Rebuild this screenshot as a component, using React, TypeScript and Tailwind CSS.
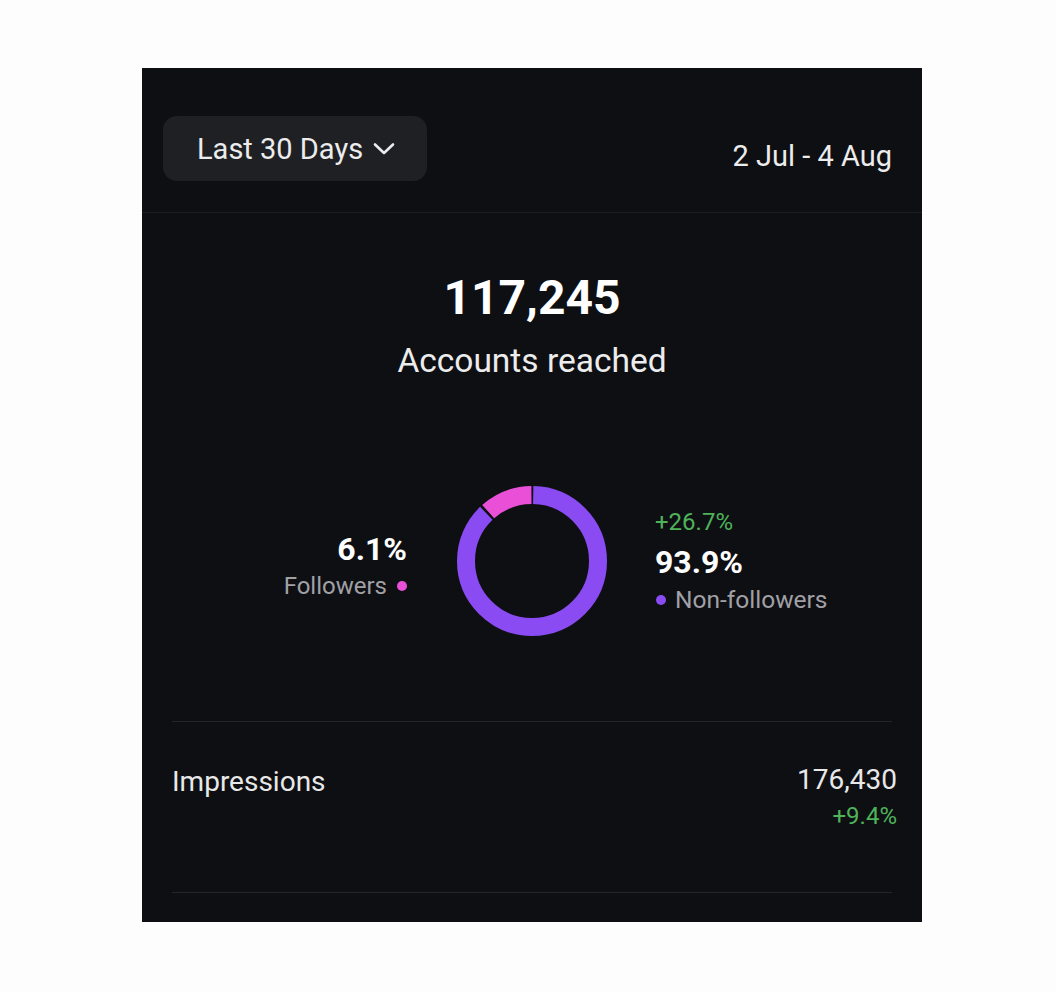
const font = { fontFamily: 'Roboto, "Liberation Sans", sans-serif' };

// Ring geometry for the reach split
const R = 66;
const C = 2 * Math.PI * R;

function ReachDonut() {
  const followers = 0.12;
  const gap = 2.5;
  return (
    <svg width="150" height="150" viewBox="0 0 150 150">
      <g transform="rotate(-90 75 75)">
        {/* non-followers, clockwise from the top */}
        <circle
          cx="75"
          cy="75"
          r={R}
          fill="none"
          stroke="#8a4cf2"
          strokeWidth="18"
          strokeDasharray={`${C * (1 - followers) - gap} ${C}`}
          strokeDashoffset={-gap / 2}
        />
        {/* followers, the last slice before the top */}
        <circle
          cx="75"
          cy="75"
          r={R}
          fill="none"
          stroke="#ea4fd8"
          strokeWidth="18"
          strokeDasharray={`${C * followers - gap} ${C}`}
          strokeDashoffset={-(C * (1 - followers) + gap / 2)}
        />
      </g>
    </svg>
  );
}

function Chevron() {
  return (
    <svg width="22" height="14" viewBox="0 0 22 14" fill="none">
      <path d="M2 2.5 L11 11 L20 2.5" stroke="#ececec" strokeWidth="2.6" strokeLinecap="round" strokeLinejoin="round" />
    </svg>
  );
}

export default function App() {
  return (
    <div className="min-h-[992px] bg-[#fdfdfd] pl-[142px] pt-[68px]" style={font}>
      <div className="flex h-[854px] w-[780px] flex-col bg-[#0e0f13]">
        {/* Header */}
        <div className="flex h-[144px] items-start justify-between pl-[21px] pr-[30px] pt-[48px]">
          <button className="flex h-[65px] w-[264px] items-center gap-[10px] rounded-[14px] bg-[#1f2024] pl-[34px] text-[29px] leading-[34px] text-[#ececec]">
            Last 30 Days
            <Chevron />
          </button>
          <span className="mt-[23px] text-[29px] leading-[34px] text-[#ececec]">2 Jul - 4 Aug</span>
        </div>
        <div className="h-px bg-[#1c1d22]" />

        {/* Accounts reached */}
        <div className="mt-[59px] flex flex-col items-center">
          <div className="text-[48px] font-bold leading-[52px] text-white">117,245</div>
          <div className="mt-[18px] text-[33.5px] leading-[38px] text-[#ececec]">Accounts reached</div>
        </div>

        <div className="mt-[106px] grid grid-cols-[1fr_auto_1fr] items-center">
          <div className="flex flex-col items-end pr-[50px] pt-[11px]">
            <span className="text-[32px] font-bold leading-[34px] text-white">6.1%</span>
            <span className="mt-[5px] flex items-center gap-[10px] text-[24px] leading-[30px] text-[#a0a0a6]">
              Followers
              <span className="h-[10px] w-[10px] rounded-full bg-[#ea4fd8]" />
            </span>
          </div>
          <ReachDonut />
          <div className="flex flex-col items-start pl-[48px]">
            <span className="text-[24px] leading-[28px] text-[#4fb35a]">+26.7%</span>
            <span className="mt-[9px] text-[32px] font-bold leading-[34px] text-white">93.9%</span>
            <span className="mt-[6px] flex items-center gap-[9px] pl-[1px] text-[24.5px] leading-[30px] text-[#a0a0a6]">
              <span className="h-[10px] w-[10px] rounded-full bg-[#8a4cf2]" />
              Non-followers
            </span>
          </div>
        </div>

        {/* Impressions */}
        <div className="mx-[30px] mt-[85px] h-px bg-[#24252a]" />
        <div className="flex items-start justify-between pl-[30px] pr-[25px] pt-[43px]">
          <span className="mt-[2px] text-[28px] leading-[30px] text-[#e8e8e8]">Impressions</span>
          <div className="flex flex-col items-end">
            <span className="text-[28px] leading-[30px] text-[#e8e8e8]">176,430</span>
            <span className="mt-[7px] text-[24px] leading-[28px] text-[#4fb35a]">+9.4%</span>
          </div>
        </div>
        <div className="mx-[30px] mt-[62px] h-px bg-[#24252a]" />
      </div>
    </div>
  );
}
